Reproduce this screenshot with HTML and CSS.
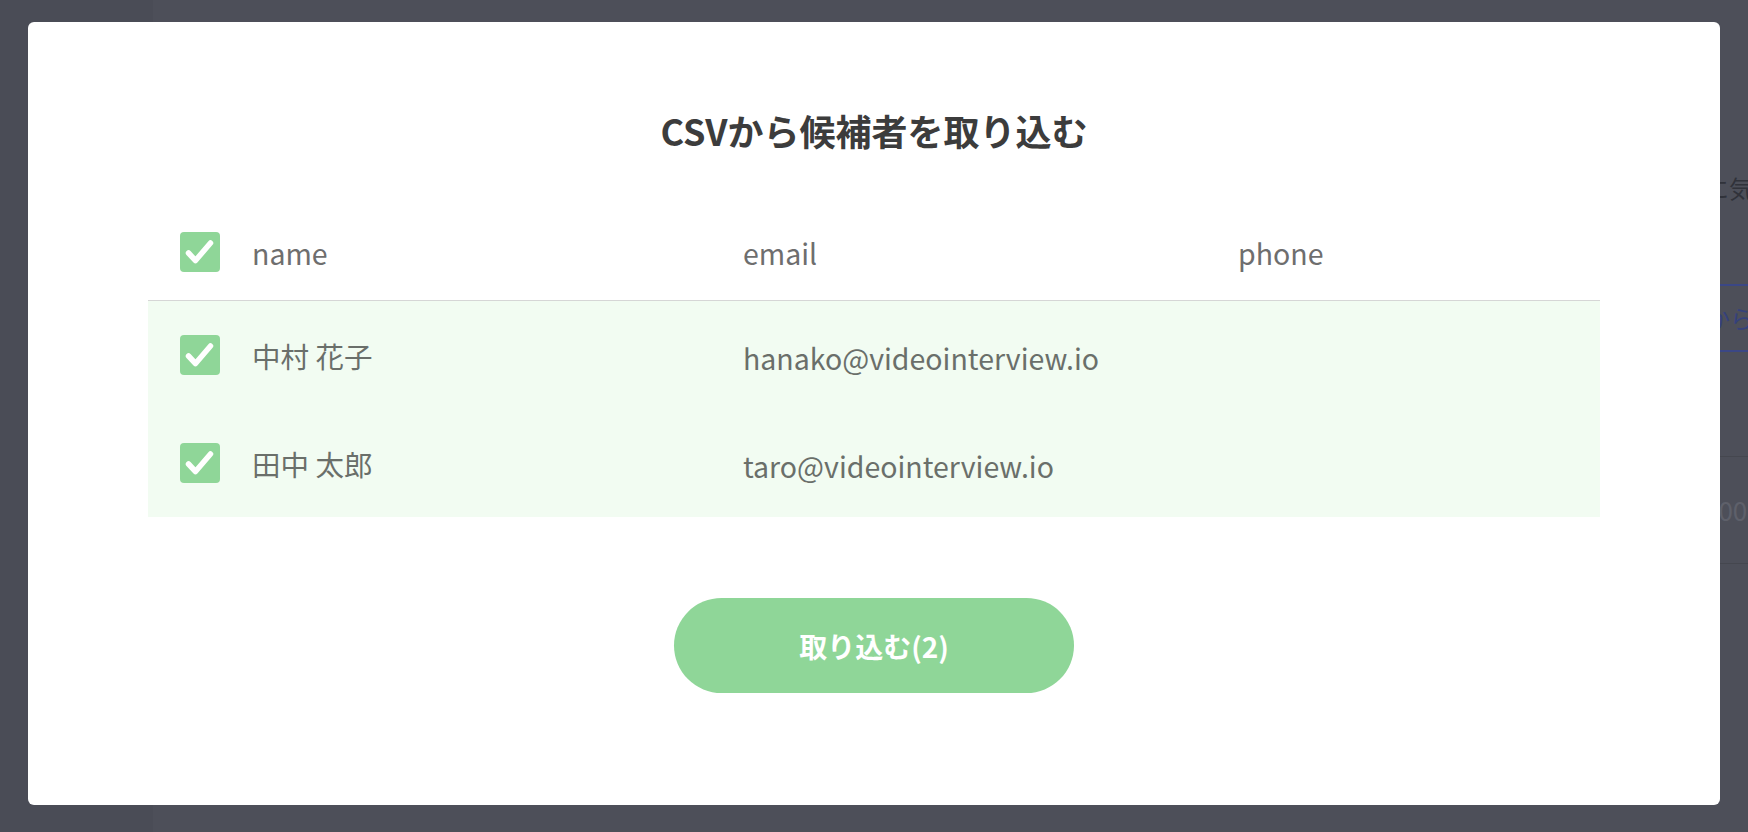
FILE: index.html
```html
<!DOCTYPE html>
<html lang="ja">
<head>
    <meta charset="UTF-8">
    <meta name="viewport" content="width=device-width, initial-scale=1.0">
    <title>CSVから候補者を取り込む</title>
    <link rel="stylesheet" href="styles.css">
</head>
<body>
    <div class="screen">
        <aside class="sidebar"></aside>
        <main class="page">
            <div class="page-col">
                <p class="page-note">に気</p>
                <div class="page-btn">から</div>
                <div class="page-row">000</div>
            </div>
        </main>
    </div>

    <div class="overlay">
        <section class="modal">
            <h1 class="modal-title">CSVから候補者を取り込む</h1>

            <div class="csv-table">
                <div class="csv-row csv-head">
                    <span class="cell-check">
                        <span class="check"><svg viewBox="0 0 40 40"><polyline points="8.5,21 15.5,28.5 30.5,11"/></svg></span>
                    </span>
                    <span class="cell">name</span>
                    <span class="cell">email</span>
                    <span class="cell">phone</span>
                </div>
                <div class="csv-row csv-item">
                    <span class="cell-check">
                        <span class="check"><svg viewBox="0 0 40 40"><polyline points="8.5,21 15.5,28.5 30.5,11"/></svg></span>
                    </span>
                    <span class="cell">中村 花子</span>
                    <span class="cell cell-mail">hanako@videointerview.io</span>
                    <span class="cell"></span>
                </div>
                <div class="csv-row csv-item">
                    <span class="cell-check">
                        <span class="check"><svg viewBox="0 0 40 40"><polyline points="8.5,21 15.5,28.5 30.5,11"/></svg></span>
                    </span>
                    <span class="cell">田中 太郎</span>
                    <span class="cell cell-mail">taro@videointerview.io</span>
                    <span class="cell"></span>
                </div>
            </div>

            <button class="import-button">取り込む(2)</button>
        </section>
    </div>
</body>
</html>
```

FILE: styles.css
```css
* {
    box-sizing: border-box;
}
html, body {
    margin: 0;
    height: 100%;
}
body {
    background-color: #4d4f59;
    font-family: "Noto Sans CJK JP", "Noto Sans", sans-serif;
    overflow: hidden;
}

/* page behind the dialog */
.screen {
    display: flex;
    height: 100%;
}
.sidebar {
    width: 153px;
    flex-shrink: 0;
    background-color: #4a4c56;
}
.page {
    flex: 1;
    display: flex;
    justify-content: flex-end;
}
.page-col {
    width: 48px;
    flex-shrink: 0;
    padding-top: 172px;
    white-space: nowrap;
}
.page-note {
    margin: 0;
    padding-left: 5px;
    font-size: 24px;
    line-height: 32px;
    color: #30323a;
}
.page-btn {
    margin: 80px 0 0 -200px;
    padding-left: 206px;
    height: 68px;
    line-height: 64px;
    font-size: 24px;
    color: #35417c;
    border-top: 2px solid #3b4785;
    border-bottom: 2px solid #3b4785;
}
.page-row {
    margin: 104px 0 0 -200px;
    padding-left: 204px;
    height: 108px;
    line-height: 106px;
    font-size: 26px;
    color: #5e606a;
    border-top: 1px solid #45474f;
    border-bottom: 1px solid #45474f;
}

/* dialog */
.overlay {
    position: fixed;
    inset: 0;
    display: flex;
    padding: 22px 28px 27px;
}
.modal {
    flex: 1;
    background-color: #ffffff;
    border-radius: 6px;
    display: flex;
    flex-direction: column;
    align-items: center;
    padding: 84px 120px 0;
}
.modal-title {
    margin: 0;
    font-size: 36px;
    line-height: 48px;
    font-weight: bold;
    color: #3c3c3c;
}
.csv-table {
    width: 100%;
    margin-top: 50px;
}
.csv-row {
    display: grid;
    grid-template-columns: 104px 491px 495px 1fr;
    align-items: center;
    height: 108px;
    font-size: 28.5px;
    color: #6a6f6a;
}
.csv-head {
    height: 97px;
    border-bottom: 1px solid #d6d6d6;
    color: #6e6e6e;
}
.csv-item {
    background-color: #f2fcf2;
}
.cell-check {
    display: flex;
    padding-left: 32px;
}
.check {
    width: 40px;
    height: 40px;
    border-radius: 4px;
    background-color: #8fd698;
    display: flex;
}
.check svg {
    width: 40px;
    height: 40px;
    fill: none;
    stroke: #ffffff;
    stroke-width: 5.5;
    stroke-linecap: round;
    stroke-linejoin: round;
}
.cell {
    white-space: nowrap;
}
.cell-mail {
    padding-top: 4px;
}
.import-button {
    margin-top: 81px;
    width: 400px;
    height: 95px;
    border: none;
    border-radius: 48px;
    background-color: #8fd698;
    color: #ffffff;
    font-family: inherit;
    font-size: 28px;
    font-weight: bold;
    cursor: pointer;
}
```
